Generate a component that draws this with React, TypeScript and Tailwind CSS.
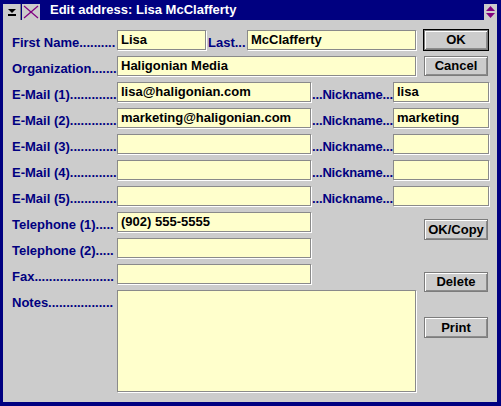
import React from "react";

function Label({ text, width = "w-[105px]" }: { text: string; width?: string }) {
  return (
    <div
      className={`${width} h-[20px] shrink-0 flex items-end whitespace-nowrap text-[13px] leading-[15px] font-bold text-[#000080]`}
    >
      {text}
    </div>
  );
}

function Field({ value, width, height = "h-[20px]" }: { value?: string; width: string; height?: string }) {
  return (
    <div
      className={`${width} ${height} shrink-0 bg-[#ffffcc] border border-[#8a8a8a] shadow-[1px_1px_0_#ffffff] px-[3px] pt-[1px] text-[13px] leading-[16px] font-bold text-black whitespace-nowrap overflow-hidden`}
    >
      {value}
    </div>
  );
}

function Button({ label, className = "", isDefault = false }: { label: string; className?: string; isDefault?: boolean }) {
  const inner = (
    <div className="w-full h-full flex items-center justify-center bg-[#cccccc] border border-[#7c7c7c] shadow-[inset_1px_1px_0_#ffffff,inset_-1px_-1px_0_#8c8c8c] text-[13px] font-bold text-black">
      {label}
    </div>
  );
  if (isDefault) {
    return <div className={`border border-black ${className}`}>{inner}</div>;
  }
  return <div className={className}>{inner}</div>;
}

function EmailRow({ n, email, nick }: { n: number; email?: string; nick?: string }) {
  return (
    <div className="flex items-end h-[20px]">
      <Label text={`E-Mail (${n}).............`} />
      <Field width="w-[194px]" value={email} />
      <Label text="...Nickname..." width="w-[82px] pl-[1px] tracking-[-0.15px]" />
      <Field width="w-[96px]" value={nick} />
    </div>
  );
}

export default function App() {
  return (
    <div className="w-[501px] h-[406px] bg-[#000080] flex flex-col overflow-hidden font-['Liberation_Sans',Arial,sans-serif]">
      {/* title bar */}
      <div className="h-[20px] flex items-end pl-[3px] pr-[4px]">
        <div className="w-[18px] h-[16px] bg-[#cccccc] border-r border-[#808080] flex items-center justify-center">
          <svg width="12" height="10" viewBox="0 0 12 10">
            <polygon points="2,2 10,2 6,6" fill="#000" />
            <rect x="2" y="7" width="8" height="2" fill="#000" />
          </svg>
        </div>
        <div className="w-[18px] h-[16px] ml-[1px] bg-[#cccccc] flex items-center justify-center">
          <svg width="16" height="14" viewBox="0 0 16 14">
            <line x1="1" y1="1" x2="15" y2="13" stroke="#800080" strokeWidth="1.2" />
            <line x1="15" y1="1" x2="1" y2="13" stroke="#800080" strokeWidth="1.2" />
          </svg>
        </div>
        <div className="ml-[10px] self-center text-[13px] font-bold text-white whitespace-nowrap">
          Edit address: Lisa McClafferty
        </div>
        <div className="ml-auto w-[13px] h-[16px] bg-[#cccccc] flex items-center justify-center">
          <svg width="11" height="14" viewBox="0 0 11 14">
            <polygon points="5.5,1 10,6 1,6" fill="#800080" />
            <polygon points="1,8 10,8 5.5,13" fill="#800080" />
          </svg>
        </div>
      </div>

      {/* client area */}
      <div className="flex-1 ml-[3px] mr-[4px] mb-[4px] bg-[#cccccc] pt-[10px] pl-[9px] flex flex-col gap-[6px]">
        <div className="flex items-end h-[20px]">
          <Label text="First Name.........." />
          <Field width="w-[89px]" value="Lisa" />
          <Label text="Last..." width="w-[41px] pl-[2px]" />
          <Field width="w-[169px]" value="McClafferty" />
          <Button label="OK" isDefault className="ml-[7px] w-[66px] h-[22px] self-center" />
        </div>
        <div className="flex items-end h-[20px]">
          <Label text="Organization......." />
          <Field width="w-[299px]" value="Haligonian Media" />
          <Button label="Cancel" className="ml-[8px] w-[64px] h-[20px]" />
        </div>
        <EmailRow n={1} email="lisa@haligonian.com" nick="lisa" />
        <EmailRow n={2} email="marketing@haligonian.com" nick="marketing" />
        <EmailRow n={3} />
        <EmailRow n={4} />
        <EmailRow n={5} />

        <div className="flex">
          <div className="flex flex-col gap-[6px]">
            <div className="flex items-end h-[20px]">
              <Label text="Telephone (1)....." />
              <Field width="w-[194px]" value="(902) 555-5555" />
            </div>
            <div className="flex items-end h-[20px]">
              <Label text="Telephone (2)....." />
              <Field width="w-[194px]" />
            </div>
            <div className="flex items-end h-[20px]">
              <Label text="Fax......................" />
              <Field width="w-[194px]" />
            </div>
            <div className="flex items-start">
              <Label text="Notes.................." />
              <Field width="w-[299px]" height="h-[102px]" />
            </div>
          </div>
          <div className="ml-[8px] flex flex-col">
            <Button label="OK/Copy" className="mt-[7px] w-[64px] h-[21px]" />
            <Button label="Delete" className="mt-[32px] w-[64px] h-[20px]" />
            <Button label="Print" className="mt-[25px] w-[64px] h-[21px]" />
          </div>
        </div>
      </div>
    </div>
  );
}
